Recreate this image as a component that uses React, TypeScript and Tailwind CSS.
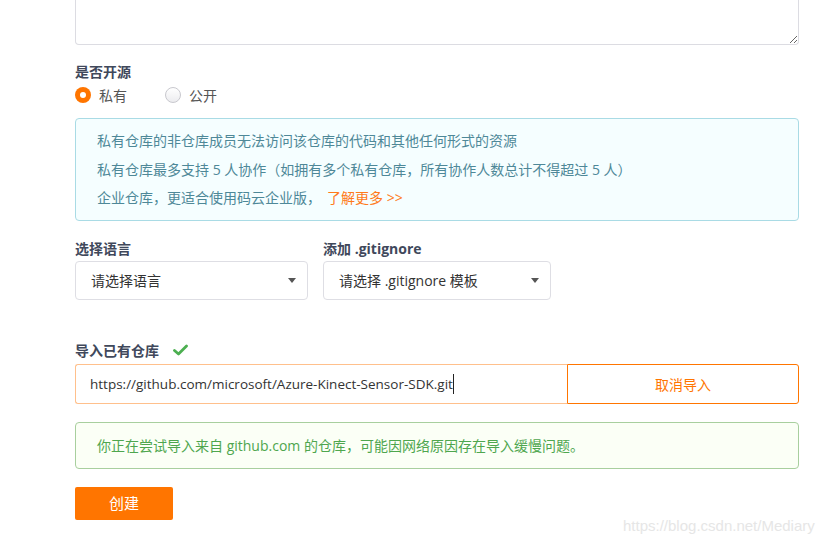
import React from 'react';

const font = { fontFamily: '"Open Sans", "Noto Sans CJK SC", sans-serif' };

function Caret() {
  return (
    <svg width="8" height="5" viewBox="0 0 8 5" className="shrink-0">
      <path d="M0 0 H8 L4 5 Z" fill="#555" />
    </svg>
  );
}

function Select({ label, placeholder, width }: { label: string; placeholder: string; width: string }) {
  return (
    <div className={`flex flex-col ${width}`}>
      <div className="text-[14px] font-bold text-[#40485b] leading-5 h-5 mb-[2px]">{label}</div>
      <div className="h-[39px] border border-[#dedee4] rounded-[4px] bg-white flex items-center justify-between pl-[15px] pr-[11px] text-[14px] text-[#333]">
        <span>{placeholder}</span>
        <Caret />
      </div>
    </div>
  );
}

export default function App() {
  return (
    <div className="relative w-[834px] h-[544px] bg-white overflow-hidden" style={font}>
      <div className="pl-[75px] pr-[35px]">
        <textarea
          className="block w-full h-[45px] border border-t-0 border-[#dcdce2] rounded-b-[4px] outline-none"
          readOnly
        />

        <div className="mt-[17px] text-[14px] font-bold text-[#40485b] leading-5">是否开源</div>
        <div className="mt-[3px] flex items-center h-5 text-[14px] text-[#555]">
          <span className="w-[16px] h-[16px] rounded-full bg-[#ff7500] flex items-center justify-center">
            <span className="w-[6px] h-[6px] rounded-full bg-white" />
          </span>
          <span className="ml-[8px]">私有</span>
          <span className="ml-[38px] w-[16px] h-[16px] rounded-full border border-[#c8c8ce] bg-gradient-to-b from-white to-[#ececef]" />
          <span className="ml-[8px]">公开</span>
        </div>

        <div className="mt-[13px] h-[103px] border border-[#a9dbe5] bg-[#f5feff] rounded-[4px] pl-[21px] pt-[8px] text-[14px] text-[#4e8898] leading-[28.5px]">
          <div>私有仓库的非仓库成员无法访问该仓库的代码和其他任何形式的资源</div>
          <div>私有仓库最多支持 5 人协作（如拥有多个私有仓库，所有协作人数总计不得超过 5 人）</div>
          <div>
            企业仓库，更适合使用码云企业版，
            <span className="ml-[6px] text-[#ff7a1a]">了解更多 &gt;&gt;</span>
          </div>
        </div>

        <div className="mt-[18px] flex gap-[15px]">
          <Select label="选择语言" placeholder="请选择语言" width="w-[233px]" />
          <Select label="添加 .gitignore" placeholder="请选择 .gitignore 模板" width="w-[228px]" />
        </div>

        <div className="mt-[40px] flex items-center h-5">
          <span className="text-[14px] font-bold text-[#40485b]">导入已有仓库</span>
          <svg width="15" height="12" viewBox="0 0 15 12" className="ml-[14px]">
            <path d="M1.5 6.5 L5.5 10 L13.5 2" fill="none" stroke="#4caf50" strokeWidth="2.8" strokeLinecap="round" strokeLinejoin="round" />
          </svg>
        </div>

        <div className="mt-[4px] flex h-[40px]">
          <div className="flex-1 border border-[#ffc08c] border-r-0 rounded-l-[3px] flex items-center pl-[14px] text-[13.5px] text-[#333]">
            <span>https://github.com/microsoft/Azure-Kinect-Sensor-SDK.git</span>
            <span className="w-px h-[20px] bg-[#222]" />
          </div>
          <div className="w-[232px] border border-[#ff7500] rounded-r-[3px] flex items-center justify-center text-[14px] text-[#ff7500]">
            取消导入
          </div>
        </div>

        <div className="mt-[18px] h-[47px] border border-[#a8cf9e] bg-[#fbfff6] rounded-[4px] flex items-center pl-[21px] text-[14px] text-[#4ea64e]">
          你正在尝试导入来自 github.com 的仓库，可能因网络原因存在导入缓慢问题。
        </div>

        <div className="mt-[18px] w-[98px] h-[33px] bg-[#ff7500] rounded-[2px] flex items-center justify-center text-[15px] text-white">
          创建
        </div>
      </div>

      <div
        className="absolute left-[623px] top-[515px] text-[15px] text-[#e6e6e6]"
        style={{ fontFamily: '"Liberation Sans", Arial, sans-serif' }}
      >
        https://blog.csdn.net/Mediary
      </div>
    </div>
  );
}
